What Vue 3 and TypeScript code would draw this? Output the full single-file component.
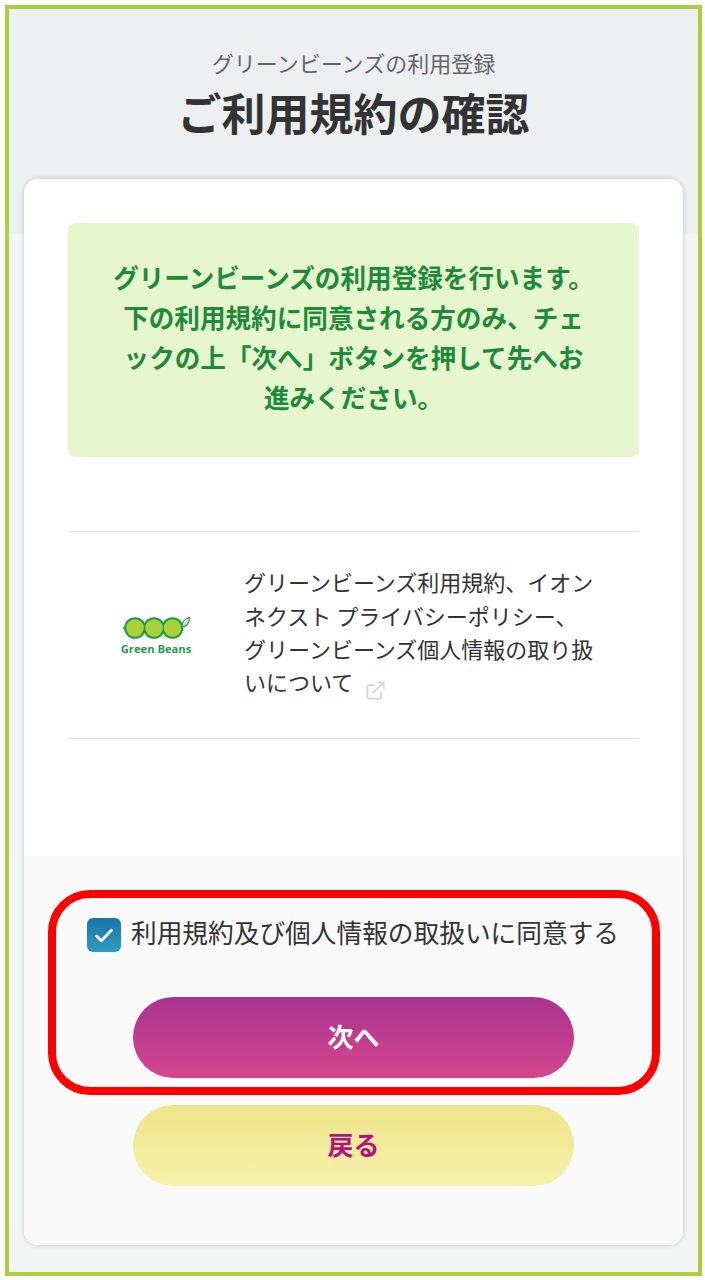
<script setup lang="ts">
const noticeLines: string[] = [
  'グリーンビーンズの利用登録を行います。',
  '下の利用規約に同意される方のみ、チェ',
  'ックの上「次へ」ボタンを押して先へお',
  '進みください。',
]
const termLines: string[] = [
  'グリーンビーンズ利用規約、イオン',
  'ネクスト プライバシーポリシー、',
  'グリーンビーンズ個人情報の取り扱',
]
</script>

<template>
  <div class="frame">
    <header class="head">
      <p class="sub">グリーンビーンズの利用登録</p>
      <h1 class="title">ご利用規約の確認</h1>
    </header>
    <main class="card">
      <section class="upper">
        <div class="notice">
          <div v-for="line in noticeLines" :key="line" class="notice-line">{{ line }}</div>
        </div>
        <div class="terms">
          <div class="logo">
            <svg class="pod" width="68" height="24" viewBox="0 0 68 24" aria-hidden="true">
              <path d="M0.500 12 L5 8 L5 16 Z" fill="#1f9a45" />
              <circle cx="13" cy="12" r="10.800" fill="#1f9a45" />
              <circle cx="32" cy="12" r="10.800" fill="#1f9a45" />
              <circle cx="50.500" cy="12" r="10.800" fill="#1f9a45" />
              <circle cx="13" cy="12" r="8.800" fill="#a9d23a" />
              <circle cx="32" cy="12" r="8.800" fill="#a9d23a" />
              <circle cx="50.500" cy="12" r="8.800" fill="#a9d23a" />
              <path d="M60 11 C60 6.500 62.500 3 67.300 1.500 C67.300 7 64.500 10.500 60 11 Z" fill="#fff" stroke="#1f9a45" stroke-width="1.200" />
              <path d="M62 9 L65 4.500" stroke="#a9d23a" stroke-width="1" fill="none" />
            </svg>
            <span class="logo-text">Green Beans</span>
          </div>
          <div class="terms-text">
            <div v-for="line in termLines" :key="line">{{ line }}</div>
            <div class="last">
              いについて
              <svg class="ext" width="19" height="19" viewBox="0 0 21 21" fill="none" stroke="#d4d4d4" stroke-width="2" aria-hidden="true">
                <path d="M9 4.500 H3 Q1.500 4.500 1.500 6 V18 Q1.500 19.500 3 19.500 H15 Q16.500 19.500 16.500 18 V12" />
                <path d="M7.500 13.500 L19 2 M12.500 1.500 H19.500 V8.500" />
              </svg>
            </div>
          </div>
        </div>
      </section>
      <section class="lower">
        <label class="agree">
          <span class="check">
            <svg width="22" height="17" viewBox="0 0 20 16" fill="none" stroke="#fff" stroke-width="2.600" stroke-linecap="round" stroke-linejoin="round" aria-hidden="true">
              <path d="M3 8.500 L7.500 13 L17 3" />
            </svg>
          </span>
          <span class="agree-text">利用規約及び個人情報の取扱いに同意する</span>
        </label>
        <button class="btn next" type="button">次へ</button>
        <button class="btn back" type="button">戻る</button>
        <div class="highlight"></div>
      </section>
    </main>
  </div>
</template>

<style>
html, body { margin: 0; padding: 0; background: #fff; }
</style>

<style scoped>
* { box-sizing: border-box; }
.frame {
  width: 697px;
  height: 1271px;
  margin: 5px;
  border: 4px solid #a8d03c;
  background: linear-gradient(#ecf0f1 0, #ecf0f1 225px, #f4f6f6 225px);
  font-family: "Noto Sans CJK JP", "Noto Sans", sans-serif;
  color: #333;
  padding: 0 15px;
}
.head {
  height: 170px;
  padding-top: 35px;
  text-align: center;
}
.sub {
  margin: 0;
  font-size: 22px;
  line-height: 36px;
  color: #666;
}
.title {
  margin: 0;
  font-size: 44px;
  line-height: 64px;
  font-weight: 700;
  color: #333;
}
.card {
  width: 659px;
  height: 1066px;
  background: #fff;
  border-radius: 14px;
  box-shadow: 0 0 5px rgba(0, 0, 0, 0.2);
  overflow: hidden;
  display: flex;
  flex-direction: column;
}
.upper {
  height: 677px;
  padding: 44px 44px 0;
}
.notice {
  height: 234px;
  border-radius: 8px;
  background: #e6f6cd;
  color: #1e8a3c;
  font-size: 25.600px;
  font-weight: 700;
  line-height: 40px;
  text-align: center;
  padding-top: 34px;
}
.notice-line { white-space: nowrap; }
.terms {
  margin-top: 74px;
  height: 208px;
  border-top: 1px solid #e2e2e2;
  border-bottom: 1px solid #e2e2e2;
  display: flex;
  align-items: center;
}
.logo {
  width: 176px;
  flex: none;
  display: flex;
  flex-direction: column;
  align-items: center;
  gap: 1px;
  padding-top: 2px;
}
.logo-text {
  font-family: "Open Sans", sans-serif;
  font-size: 11.200px;
  line-height: 16px;
  font-weight: 700;
  color: #1f9a50;
  white-space: nowrap;
}
.pod { display: block; }
.terms-text {
  font-size: 22px;
  line-height: 33.300px;
  white-space: nowrap;
  color: #333;
  margin-top: -6px;
}
.last {
  display: flex;
  align-items: center;
  gap: 13px;
  height: 33.300px;
}
.ext { margin: 9px 0 -9px; }
.lower {
  flex: 1;
  position: relative;
  background: #fafafa;
  display: flex;
  flex-direction: column;
  align-items: center;
}
.agree {
  align-self: flex-start;
  margin: 62px 0 0 63px;
  height: 34px;
  display: flex;
  align-items: center;
  gap: 10px;
}
.check {
  width: 34px;
  height: 34px;
  border-radius: 6px;
  background: linear-gradient(#1a74a6, #2e9cc5);
  display: flex;
  align-items: center;
  justify-content: center;
}
.agree-text {
  font-size: 25.700px;
  line-height: 34px;
  margin-top: -7px;
  white-space: nowrap;
  color: #333;
}
.btn {
  display: block;
  width: 441px;
  height: 81px;
  border: 0;
  border-radius: 41px;
  font-family: inherit;
  font-size: 26px;
  font-weight: 700;
  padding: 0 0 5px;
}
.next {
  margin-top: 45px;
  color: #fff;
  background: linear-gradient(#a93391, #d4478c);
}
.back {
  margin-top: 27px;
  color: #b5107e;
  background: linear-gradient(#eee48a, #f5f2a9);
}
.highlight {
  position: absolute;
  left: 24px;
  top: 34px;
  width: 612px;
  height: 205px;
  border: 8px solid #ff0000;
  border-radius: 42px;
  pointer-events: none;
}
</style>
